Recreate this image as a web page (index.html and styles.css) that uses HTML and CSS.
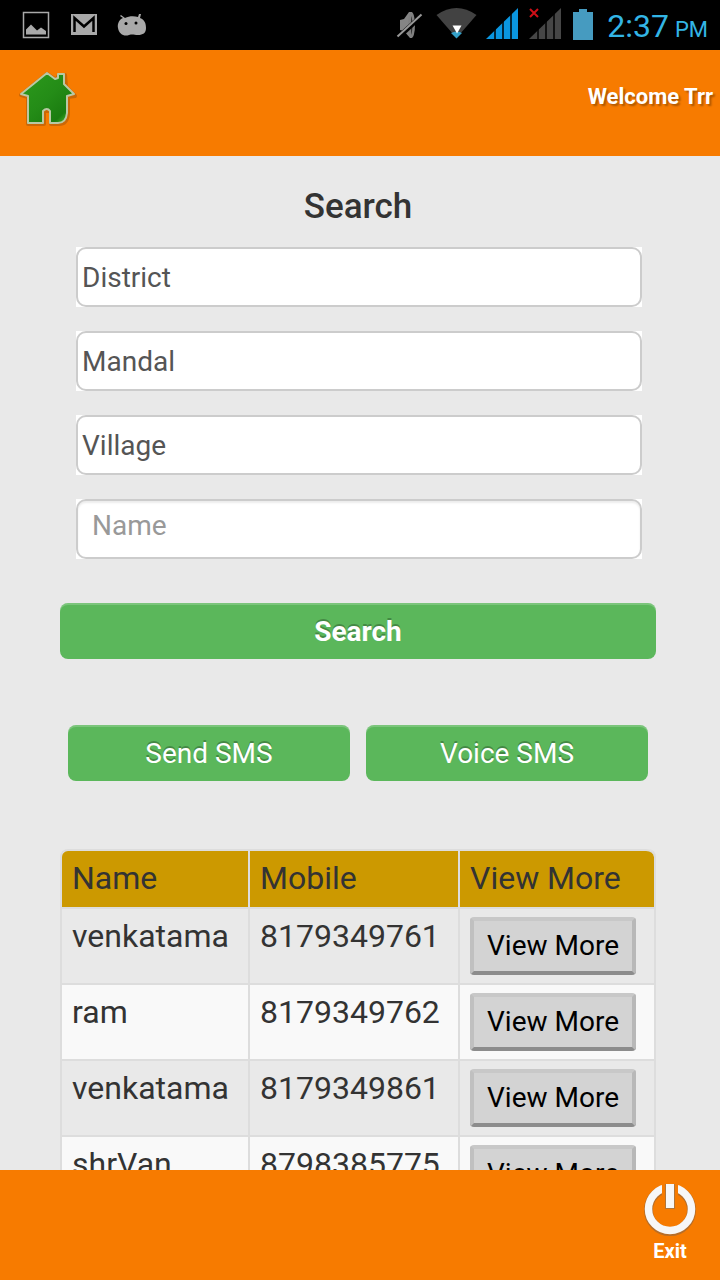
FILE: index.html
```html
<!DOCTYPE html>
<html lang="en">
<head>
    <meta charset="UTF-8">
    <meta name="viewport" content="width=device-width, initial-scale=1.0">
    <title>Search</title>
    <link rel="stylesheet" href="styles.css">
</head>
<body>
    <div class="status-bar">
        <svg width="160" height="50" viewBox="0 0 160 50" fill="#a9a9a9">
            <rect x="23.500" y="12.500" width="25" height="25" fill="none" stroke="#a9a9a9" stroke-width="1.500"/>
            <path d="M26 34.500v-5l5-5 4 4 2 2 4-3 5 3.500v3.500z"/>
            <path d="M71 14h26v21H71z"/>
            <path d="M74.500 32V18l9.500 8.500 9.500-8.500v14" fill="none" stroke="#000" stroke-width="2.500"/>
            <path d="M118 28c-1-5 2-9 5-10l-3-2 1-1 4 3c4-2 9-2 13-1l1-3h2l-1 4c5 2 6 6 6 10 0 5-3 7-8 7-4 0-5-1-9 0-5 2-10-1-11-7z"/>
            <circle cx="126" cy="23.500" r="1.500" fill="#000"/>
            <circle cx="136" cy="23" r="1.500" fill="#000"/>
        </svg>
        <svg class="status-right" width="210" height="50" viewBox="390 0 210 50">
            <path d="M401 20l4-1 5-7h3v26h-2l-6-7-4-1z" fill="#858585"/>
            <ellipse cx="412.500" cy="25" rx="3.500" ry="13" fill="#808080"/>
            <path d="M412 16c2 4 2 14 0 19z" fill="#333"/>
            <path d="M399 37.500l24-22" stroke="#000" stroke-width="5"/>
            <path d="M398.500 36.500l24-22" stroke="#999" stroke-width="2"/>
            <path d="M437.500 15q20-14 40 0l-20 23z" fill="#424242"/>
            <path d="M452 33q6-3 11 0l-5.500 5.500z" fill="#34a0c8"/>
            <path d="M453.500 25.500h9l-4.500 8z" fill="#fff"/>
            <path d="M487 39L519 8v31z" fill="#0a96e0"/>
            <path d="M530 39L562 8v31z" fill="#464646"/>
            <path d="M496 8v32M504 8v32M512 8v32M539 18v22M547 8v32M555 8v32" stroke="#000" stroke-width="1.500"/>
            <path d="M531 9l8 8M539 9l-8 8" stroke="#d00f17" stroke-width="2"/>
            <path d="M574 12h6V9h8v3h6v28h-20z" fill="#469bc0"/>
        </svg>
        <div class="clock">2:37 <span class="clock-ampm">PM</span></div>
    </div>

    <header class="header">
        <a class="home-link" href="#" aria-label="Home">
            <svg width="60" height="60" viewBox="0 0 60 60">
                <defs>
                    <linearGradient id="roof" x1="0" y1="0" x2="1" y2="1">
                        <stop offset="0" stop-color="#2c9a1c"/>
                        <stop offset=".5" stop-color="#248c17"/>
                        <stop offset=".8" stop-color="#1b7d10"/>
                        <stop offset=".95" stop-color="#4fbe2f"/>
                    </linearGradient>
                </defs>
                <path d="M3 27L29 6l9 6 3-5h6l1 12 9 9-7 1v17q-1 10-9 10h-8V43h-7v13H10V29z" fill="none" stroke="#8a4a10" stroke-opacity=".4" stroke-width="4" stroke-linejoin="round"/>
                <path d="M3 26L29 5l8 6 3-1V6h6v10l10 10-7 2v17q-1 10-9 10h-8V43q-3-4-7 0v12H10V28z" fill="url(#roof)" stroke="#b9c8a4" stroke-width="2" stroke-linejoin="round"/>
            </svg>
        </a>
        <span class="welcome">Welcome Trr</span>
    </header>

    <main class="content">
        <h1 class="title">Search</h1>
        <form class="search-form">
            <div class="field">
                <select class="select" aria-label="District"><option>District</option></select>
            </div>
            <div class="field">
                <select class="select" aria-label="Mandal"><option>Mandal</option></select>
            </div>
            <div class="field">
                <select class="select" aria-label="Village"><option>Village</option></select>
            </div>
            <div class="field">
                <input class="input" type="text" placeholder="Name" aria-label="Name">
            </div>
            <button class="btn btn-search" type="button">Search</button>
        </form>

        <div class="sms-buttons">
            <button class="btn" type="button">Send SMS</button>
            <button class="btn" type="button">Voice SMS</button>
        </div>

        <table class="results">
            <colgroup>
                <col class="col-name">
                <col class="col-mobile">
                <col>
            </colgroup>
            <thead>
                <tr><th>Name</th><th>Mobile</th><th>View More</th></tr>
            </thead>
            <tbody>
                <tr>
                    <td>venkatama</td>
                    <td>8179349761</td>
                    <td><button class="view-more" type="button">View More</button></td>
                </tr>
                <tr>
                    <td>ram</td>
                    <td>8179349762</td>
                    <td><button class="view-more" type="button">View More</button></td>
                </tr>
                <tr>
                    <td>venkatama</td>
                    <td>8179349861</td>
                    <td><button class="view-more" type="button">View More</button></td>
                </tr>
                <tr>
                    <td>shrVan</td>
                    <td>8798385775</td>
                    <td><button class="view-more" type="button">View More</button></td>
                </tr>
            </tbody>
        </table>
    </main>

    <footer class="footer">
        <a class="exit" href="#">
            <svg width="56" height="56" viewBox="0 0 56 56" fill="none">
                <circle cx="28" cy="29" r="21.500" stroke="#9a6a3c" stroke-width="9" stroke-opacity=".7"/>
                <circle cx="28" cy="28" r="21.500" stroke="#f7f7f7" stroke-width="7.500"/>
                <path d="M20 0h16v22H20z" fill="#f77b00"/>
                <path d="M23 3h10v25H23z" fill="#b0753a"/>
                <path d="M24 3h8v24h-8z" fill="#f7f7f7"/>
            </svg>
            <span>Exit</span>
        </a>
    </footer>
</body>
</html>
```
FILE: styles.css
```css
* {
    margin: 0;
    padding: 0;
    box-sizing: border-box;
}

body {
    height: 100vh;
    display: flex;
    flex-direction: column;
    font-family: Roboto, sans-serif;
    color: #333;
    background-color: #e9e9e9;
    overflow: hidden;
}

button, input, select {
    font-family: inherit;
    font-size: 28px;
}

.status-bar {
    display: flex;
    flex-shrink: 0;
    height: 50px;
    padding-right: 12px;
    background-color: #000;
}

.status-right {
    margin-left: auto;
}

.clock {
    display: flex;
    align-items: baseline;
    gap: 6px;
    padding-left: 8px;
    font-size: 32px;
    line-height: 52px;
    color: #33b5e5;
    white-space: nowrap;
}

.clock-ampm {
    font-size: 22px;
}

.header {
    display: flex;
    flex-shrink: 0;
    justify-content: space-between;
    align-items: flex-start;
    height: 106px;
    padding: 18px 7px 0 18px;
    background-color: #f77b00;
}

.welcome {
    font-size: 22px;
    line-height: 58px;
    font-weight: 700;
    color: #fff;
    text-shadow: 2px 2px 2px rgba(0, 0, 0, 0.3);
}

.content {
    flex: 1;
    min-height: 0;
    overflow: hidden;
    padding: 31px 64px 0 60px;
}

.title {
    font-size: 35px;
    line-height: 40px;
    font-weight: 500;
    text-align: center;
}

.search-form {
    display: flex;
    flex-direction: column;
    gap: 24px;
    padding-top: 20px;
}

.field {
    height: 60px;
    margin: 0 14px 0 16px;
    background-color: #fff;
}

.select, .input {
    appearance: none;
    display: block;
    width: 100%;
    height: 60px;
    border: 2px solid #ccc;
    border-radius: 10px;
    background-color: #fff;
    color: #555;
}

.select {
    padding: 0 4px;
}

.input {
    padding: 0 14px 8px;
    box-shadow: inset 0 2px 2px rgba(0, 0, 0, 0.08);
}

.input::placeholder {
    color: #999;
}

.btn {
    height: 56px;
    border: none;
    border-radius: 8px;
    background-color: #5bb75b;
    color: #fff;
    text-shadow: 0 -2px 0 rgba(0, 0, 0, 0.25);
    box-shadow: inset 0 2px 0 rgba(255, 255, 255, 0.2);
}

.btn-search {
    margin-top: 20px;
    font-weight: 700;
}

.sms-buttons {
    display: flex;
    gap: 16px;
    padding: 66px 8px 68px;
}

.sms-buttons .btn {
    flex: 1;
}

.results {
    width: 100%;
    table-layout: fixed;
    border-collapse: separate;
    border-spacing: 0;
    border-right: 2px solid #ddd;
    border-radius: 8px;
    font-size: 32px;
    line-height: 38px;
}

.col-name {
    width: 188px;
}

.col-mobile {
    width: 210px;
}

.results th, .results td {
    border-top: 2px solid #ddd;
    border-left: 2px solid #ddd;
    padding: 8px 10px;
    text-align: left;
    vertical-align: top;
    font-weight: 400;
}

.results th {
    height: 58px;
    background-color: #cc9900;
}

.results th:first-child {
    border-top-left-radius: 8px;
}

.results th:last-child {
    border-top-right-radius: 8px;
}

.results td {
    height: 76px;
}

.results tbody tr:nth-child(even) {
    background-color: #f9f9f9;
}

.view-more {
    display: block;
    width: 166px;
    height: 58px;
    padding-bottom: 2px;
    border: 4px solid;
    border-color: #c8c8c8 #b8b8b8 #8c8c8c #c0c0c0;
    border-radius: 4px;
    background-color: #d3d3d3;
    color: #000;
}

.footer {
    display: flex;
    flex-shrink: 0;
    justify-content: flex-end;
    height: 110px;
    padding: 11px 22px 0;
    background-color: #f77b00;
}

.exit {
    display: flex;
    flex-direction: column;
    align-items: center;
    font-size: 20px;
    line-height: 28px;
    font-weight: 700;
    color: #fff;
    text-decoration: none;
}
```
